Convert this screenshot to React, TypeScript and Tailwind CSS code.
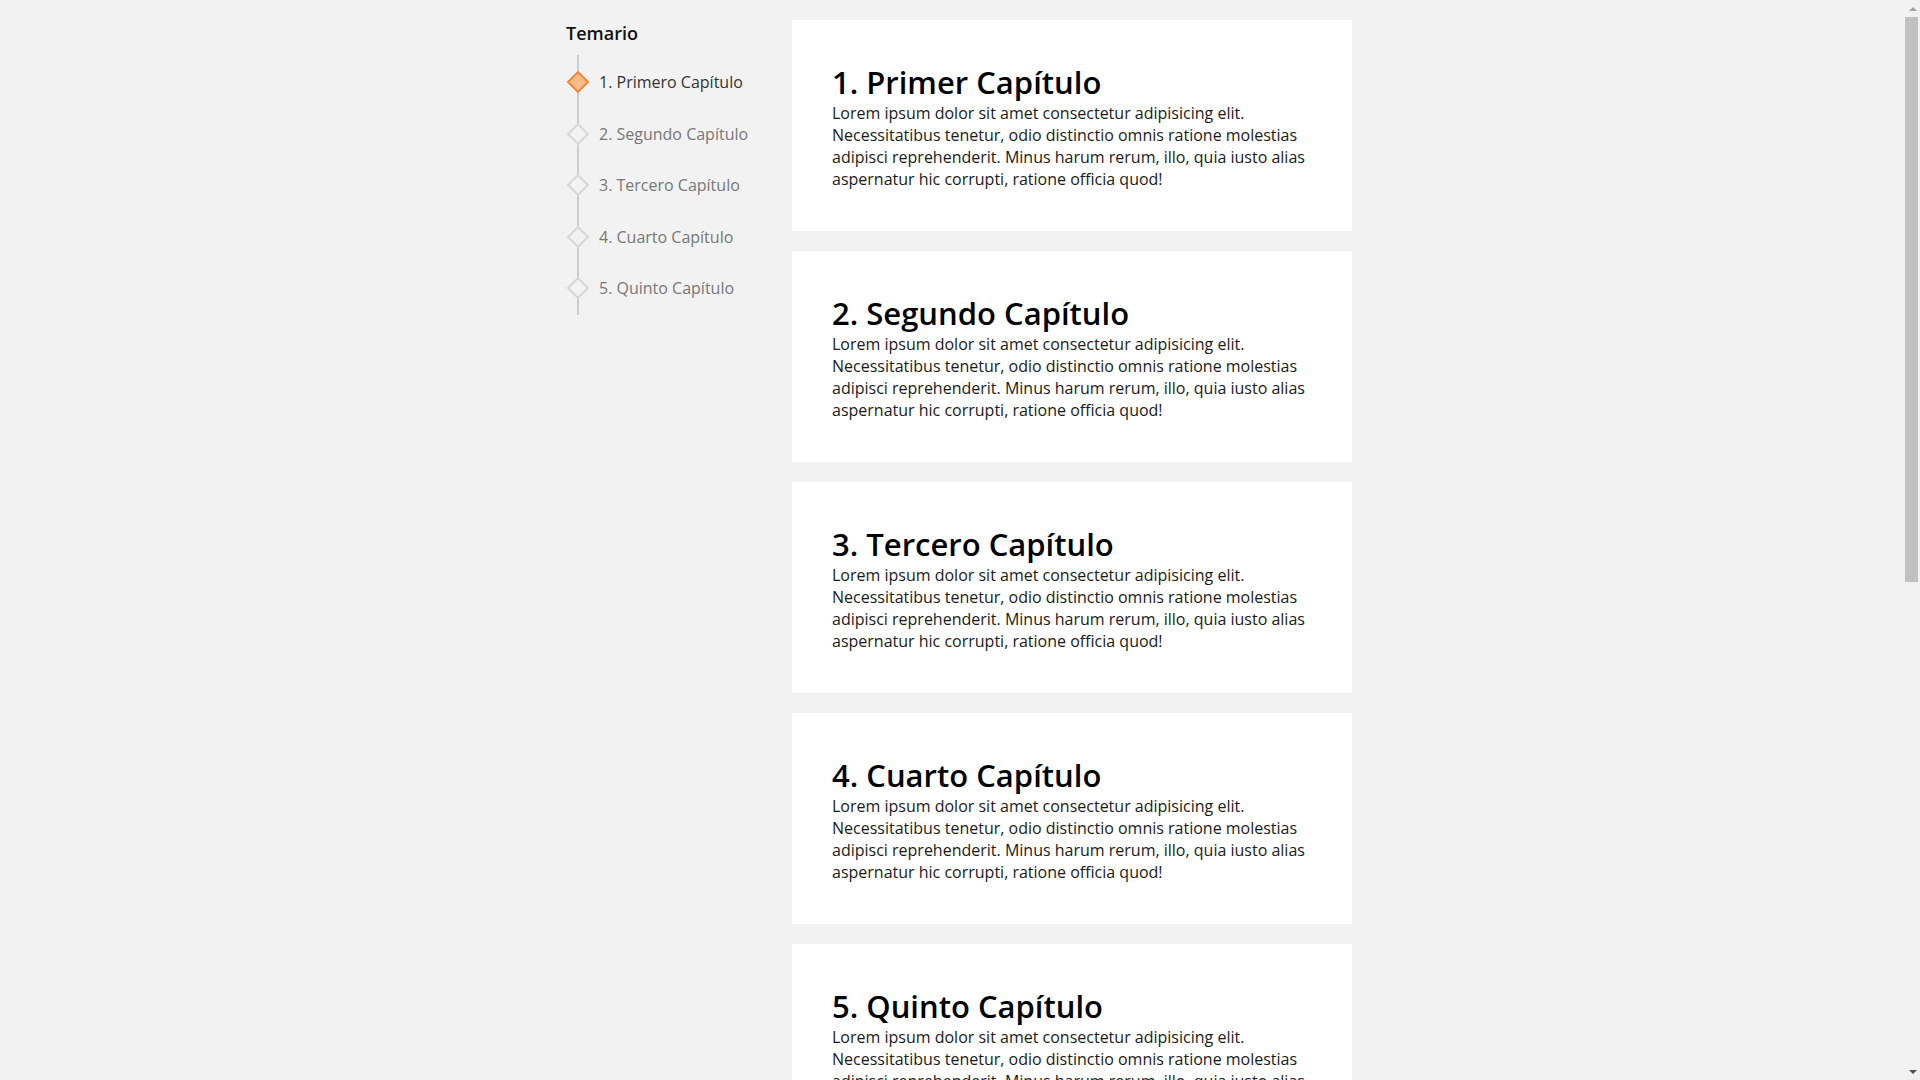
import React from "react";

const chapters = [
  "1. Primer Capítulo",
  "2. Segundo Capítulo",
  "3. Tercero Capítulo",
  "4. Cuarto Capítulo",
  "5. Quinto Capítulo",
];

const toc = [
  "1. Primero Capítulo",
  "2. Segundo Capítulo",
  "3. Tercero Capítulo",
  "4. Cuarto Capítulo",
  "5. Quinto Capítulo",
];

const lorem =
  "Lorem ipsum dolor sit amet consectetur adipisicing elit. Necessitatibus tenetur, odio distinctio omnis ratione molestias adipisci reprehenderit. Minus harum rerum, illo, quia iusto alias aspernatur hic corrupti, ratione officia quod!";

function FakeScrollbar() {
  return (
    <div className="fixed right-0 top-0 flex h-screen w-[15px] flex-col items-center bg-[#f1f1f1]">
      <div className="flex h-[17px] w-full items-center justify-center">
        <span className="block h-0 w-0 border-x-[4px] border-b-[4px] border-x-transparent border-b-[#a3a3a3]" />
      </div>
      <div className="h-[565px] w-[13px] self-start bg-[#c1c1c1]" />
      <div className="flex-1" />
      <div className="flex h-[17px] w-full items-center justify-center">
        <span className="block h-0 w-0 border-x-[4px] border-t-[4px] border-x-transparent border-t-[#505050]" />
      </div>
    </div>
  );
}

export default function App() {
  return (
    <div
      className="min-h-screen bg-[#f2f2f2] text-[#111]"
      style={{ fontFamily: '"Open Sans", "Noto Sans", sans-serif' }}
    >
      <div className="mx-auto flex w-[788px] items-start gap-[26px] pt-[20px] pb-[40px] pr-[2px]">
        <aside className="sticky top-[20px] w-[200px] shrink-0">
          <h2 className="text-[18px] font-semibold leading-[26px] text-[#111]">Temario</h2>
          <div className="relative mt-[9px] pb-[16px]">
            <div className="absolute left-[11px] top-0 bottom-0 w-[2px] bg-[#cccccc]" />
            <ul className="relative flex flex-col gap-[29.6px] pt-[16px]">
              {toc.map((t, i) => (
                <li key={t} className="flex h-[22px] items-center">
                  <span className="flex w-[24px] justify-center">
                    <span
                      className={
                        i === 0
                          ? "block h-[16px] w-[16px] rotate-45 border-2 border-[#f0883a] bg-[#f9bb85]"
                          : "block h-[16px] w-[16px] rotate-45 border-2 border-[#d6d6d6] bg-[#f2f2f2]"
                      }
                    />
                  </span>
                  <span
                    className={
                      i === 0
                        ? "ml-[9px] text-[16px] text-[#333]"
                        : "ml-[9px] text-[16px] text-[#777]"
                    }
                  >
                    {t}
                  </span>
                </li>
              ))}
            </ul>
          </div>
        </aside>
        <main className="flex w-[560px] flex-col gap-[20px]">
          {chapters.map((c) => (
            <section key={c} className="h-[211px] shrink-0 bg-white px-[40px] pt-[42px]">
              <h1 className="text-[31px] font-semibold leading-[40px] text-black">{c}</h1>
              <p className="text-[16px] leading-[22px] text-[#1a1a1a]">{lorem}</p>
            </section>
          ))}
        </main>
      </div>
      <FakeScrollbar />
    </div>
  );
}
